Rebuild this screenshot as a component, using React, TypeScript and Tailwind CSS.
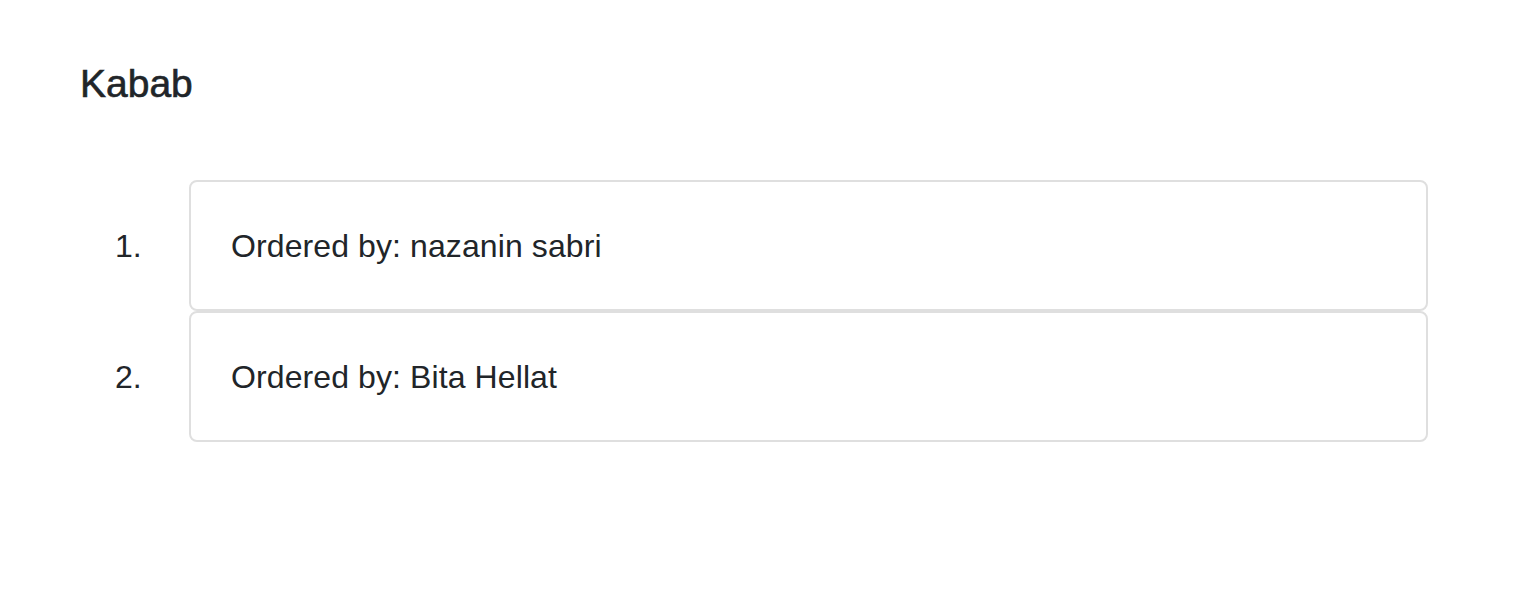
const orders = [
  { id: 1, name: 'nazanin sabri' },
  { id: 2, name: 'Bita Hellat' },
]

function OrderRow({ index, name }: { index: number; name: string }) {
  return (
    <li className="flex items-baseline">
      <span className="w-[109px] shrink-0 pl-[35px] text-[32px] leading-[48px]">{index}.</span>
      <div className="flex-1 rounded-[8px] border-2 border-[#dfdfdf] bg-white px-[40px] pb-[39px] pt-[40px]">
        <p className="text-[32px] leading-[48px] tracking-[0.1px]">Ordered by: {name}</p>
      </div>
    </li>
  )
}

export default function App() {
  return (
    <div
      className="min-h-screen bg-white pl-[80px] pr-[86px] pt-[60px] text-[#212529]"
      style={{ fontFamily: '"Liberation Sans", Arial, sans-serif' }}
    >
      <h5 className="text-[39px] font-medium leading-[48px] [-webkit-text-stroke:0.6px]">Kabab</h5>
      <ol className="mt-[72px] flex flex-col">
        {orders.map((o) => (
          <OrderRow key={o.id} index={o.id} name={o.name} />
        ))}
      </ol>
    </div>
  )
}
